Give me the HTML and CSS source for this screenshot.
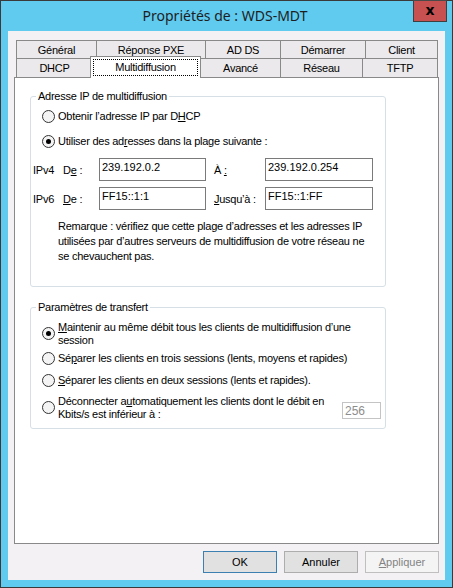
FILE: index.html
```html
<!DOCTYPE html>
<html lang="fr">
<head>
<meta charset="utf-8">
<title>Propriétés de : WDS-MDT</title>
<link rel="stylesheet" href="styles.css">
</head>
<body>
<div class="window">
  <div class="titlebar">
    <span class="spacer"></span>
    <span class="title">Propriétés de : WDS-MDT</span>
    <button class="close" type="button">x</button>
  </div>
  <div class="client">
    <div class="tabrow row1">
      <div class="tab t-general">Général</div>
      <div class="tab t-pxe">Réponse PXE</div>
      <div class="tab t-adds">AD DS</div>
      <div class="tab t-dem">Démarrer</div>
      <div class="tab t-client">Client</div>
    </div>
    <div class="tabrow row2">
      <div class="tab t-dhcp">DHCP</div>
      <div class="tab t-multi selected"><span class="focus">Multidiffusion</span></div>
      <div class="tab t-avance">Avancé</div>
      <div class="tab t-reseau">Réseau</div>
      <div class="tab t-tftp">TFTP</div>
    </div>
    <div class="panel">
      <fieldset class="group g1">
        <legend>Adresse IP de multidiffusion</legend>
        <div class="radiorow r-dhcp"><span class="radio"></span><span class="rtext">Obtenir l’adresse IP par D<u>H</u>CP</span></div>
        <div class="radiorow r-range"><span class="radio checked"></span><span class="rtext">Utiliser des ad<u>r</u>esses dans la plage suivante :</span></div>
        <div class="iprow ip4">
          <span class="ipv">IPv4</span><span class="de">D<u>e</u> :</span>
          <span class="field f1">239.192.0.2</span>
          <span class="to">À <u>:</u></span>
          <span class="field f2">239.192.0.254</span>
        </div>
        <div class="iprow ip6">
          <span class="ipv">IPv6</span><span class="de"><u>D</u>e :</span>
          <span class="field f1">FF15::1:1</span>
          <span class="to"><u>J</u>usqu’à :</span>
          <span class="field f2">FF15::1:FF</span>
        </div>
        <p class="note">Remarque : vérifiez que cette plage d’adresses et les adresses IP<br>utilisées par d’autres serveurs de multidiffusion de votre réseau ne<br>se chevauchent pas.</p>
      </fieldset>
      <fieldset class="group g2">
        <legend>Paramètres de transfert</legend>
        <div class="radiorow tall r-keep"><span class="radio checked"></span><span class="rtext"><u>M</u>aintenir au même débit tous les clients de multidiffusion d’une<br>session</span></div>
        <div class="radiorow r-three"><span class="radio"></span><span class="rtext">Sé<u>p</u>arer les clients en trois sessions (lents, moyens et rapides)</span></div>
        <div class="radiorow r-two"><span class="radio"></span><span class="rtext"><u>S</u>éparer les clients en deux sessions (lents et rapides).</span></div>
        <div class="radiorow tall r-disc"><span class="radio"></span><span class="rtext wrap">Déconnecter a<u>u</u>tomatiquement les clients dont le débit en<br>Kbits/s est inférieur à :</span><span class="field small">256</span></div>
      </fieldset>
    </div>
    <div class="buttons">
      <button class="btn default" type="button">OK</button>
      <button class="btn" type="button">Annuler</button>
      <button class="btn disabled" type="button"><u>A</u>ppliquer</button>
    </div>
  </div>
</div>
</body>
</html>
```
FILE: styles.css
```css
* { box-sizing: border-box; }
html, body { margin: 0; padding: 0; background: #5fcaef; }
body { font-family: "Liberation Sans", Arial, sans-serif; font-size: 11px; color: #000; letter-spacing: -0.25px; }
u { text-decoration: underline; text-underline-offset: 1px; }

.window {
  width: 453px;
  height: 588px;
  border: 1px solid #3a3a3a;
  background: #60caef;
  padding: 0 7px 7px 7px;
  display: flex;
  flex-direction: column;
}

.titlebar {
  height: 30px;
  display: grid;
  grid-template-columns: 1fr auto 1fr;
  align-items: start;
  margin: 0 -2px 0 -7px;
}
.title {
  font-family: "Noto Sans", "Liberation Sans", sans-serif;
  font-size: 14px;
  letter-spacing: 0;
  line-height: 30px;
  color: #1e1e1e;
  padding-left: 2px;
}
.close {
  justify-self: end;
  width: 34px;
  height: 22px;
  margin-top: -1px;
  background: #c75050;
  border: 1px solid #3f3f3f;
  border-top-color: #4a4a4a;
  font-family: "DejaVu Sans", sans-serif;
  font-weight: bold;
  font-size: 14px;
  letter-spacing: 0;
  line-height: 16px;
  color: #000;
  padding: 0 0 2px 0;
}

.client {
  flex: 1;
  background: #f4f1f4;
  padding: 9px 6px 0 6px;
  display: flex;
  flex-direction: column;
}

.tabrow { display: flex; margin-left: 2px; height: 19px; }
.row2 { margin-top: -1px; align-items: flex-end; }
.tab {
  height: 19px;
  border: 1px solid #898989;
  border-bottom: none;
  background: #ebe9eb;
  text-align: center;
  line-height: 18px;
  margin-left: -1px;
  white-space: nowrap;
}
.tab:first-child { margin-left: 0; }
.t-general { width: 81px; }
.t-pxe { width: 110px; }
.t-adds { width: 76px; }
.t-dem { width: 86px; }
.t-client { width: 73px; }
.t-dhcp { width: 77px; }
.t-multi { width: 111px; }
.t-avance { width: 84px; margin-left: -4px; padding-left: 3px; }
.t-reseau { width: 83px; }
.t-tftp { width: 76px; }
.row2 .tab { line-height: 19px; }
.tab.selected {
  height: 22px;
  margin-left: -3px;
  margin-bottom: -1px;
  background: #fff;
  position: relative;
  z-index: 1;
  padding: 2px 2px 0 2px;
  line-height: 14px;
}
.focus {
  display: block;
  height: 17px;
  border: 1px dotted #000;
  line-height: 14px;
}

.panel {
  height: 467px;
  background: #fff;
  border: 1px solid #898989;
  padding: 0 0 0 15px;
}

.group {
  width: 356px;
  border: 1px solid #d5dfe5;
  border-radius: 3px;
  margin: 0;
  padding: 0;
  min-width: 0;
}
.g1 { margin-top: 12px; padding-bottom: 22px; }
.g2 { margin-top: 14px; padding-bottom: 7px; }
.group legend {
  margin-left: 5px;
  padding: 0 2px;
  line-height: 13px;
  height: 13px;
}

.radiorow { display: flex; align-items: center; height: 16px; line-height: 13px; }
.radiorow.tall { height: 26px; }
.radio {
  flex: none;
  width: 13px;
  height: 13px;
  border: 1px solid #333;
  border-radius: 50%;
  background: #f4f4f4;
  margin: 0 3px 0 11px;
  display: flex;
  align-items: center;
  justify-content: center;
}
.radio.checked::after {
  content: "";
  width: 5px;
  height: 5px;
  border-radius: 50%;
  background: #000;
}
.rtext { white-space: nowrap; }
.r-dhcp { margin-top: 5px; }
.r-range { margin-top: 9px; }
.r-keep { margin-top: 7px; }
.r-keep .radio { margin-top: -2px; }
.r-three { margin-top: 3px; }
.r-two { margin-top: 6px; }
.r-disc { margin-top: 7px; align-items: center; }
.r-disc .radio { margin-top: -2px; }
.rtext.wrap { width: 284px; }

.iprow { display: flex; align-items: center; height: 23px; }
.ip4 { margin-top: 9px; }
.ip6 { margin-top: 6px; }
.ipv { width: 30px; margin-left: 2px; }
.de { width: 36px; }
.to { width: 51px; margin-left: 8px; }
.field {
  display: block;
  height: 23px;
  border: 1px solid #7a7a7a;
  background: #fff;
  padding: 2px 2px 0 2px;
  line-height: 13px;
  letter-spacing: 0;
}
.f1 { width: 107px; }
.f2 { width: 108px; }
.field.small {
  width: 39px;
  height: 17px;
  padding: 1px 0 0 2px;
  border-color: #c4c4c4;
  color: #8d8d8d;
  align-self: flex-end;
  margin-bottom: 2px;
  line-height: 14px;
  font-size: 12px;
}

.note {
  margin: 9px 0 0 27px;
  line-height: 15px;
}

.buttons {
  display: flex;
  justify-content: flex-end;
  gap: 7px;
  margin-top: 7px;
}
.btn {
  width: 74px;
  height: 22px;
  font-family: "Liberation Sans", Arial, sans-serif;
  font-size: 11px;
  background: #e1e1e1;
  border: 1px solid #adadad;
  color: #000;
  padding: 0;
}
.btn.default { border-color: #3c7fb1; }
.btn.disabled { background: #f4f4f4; border-color: #bfbfbf; color: #838383; }
```
